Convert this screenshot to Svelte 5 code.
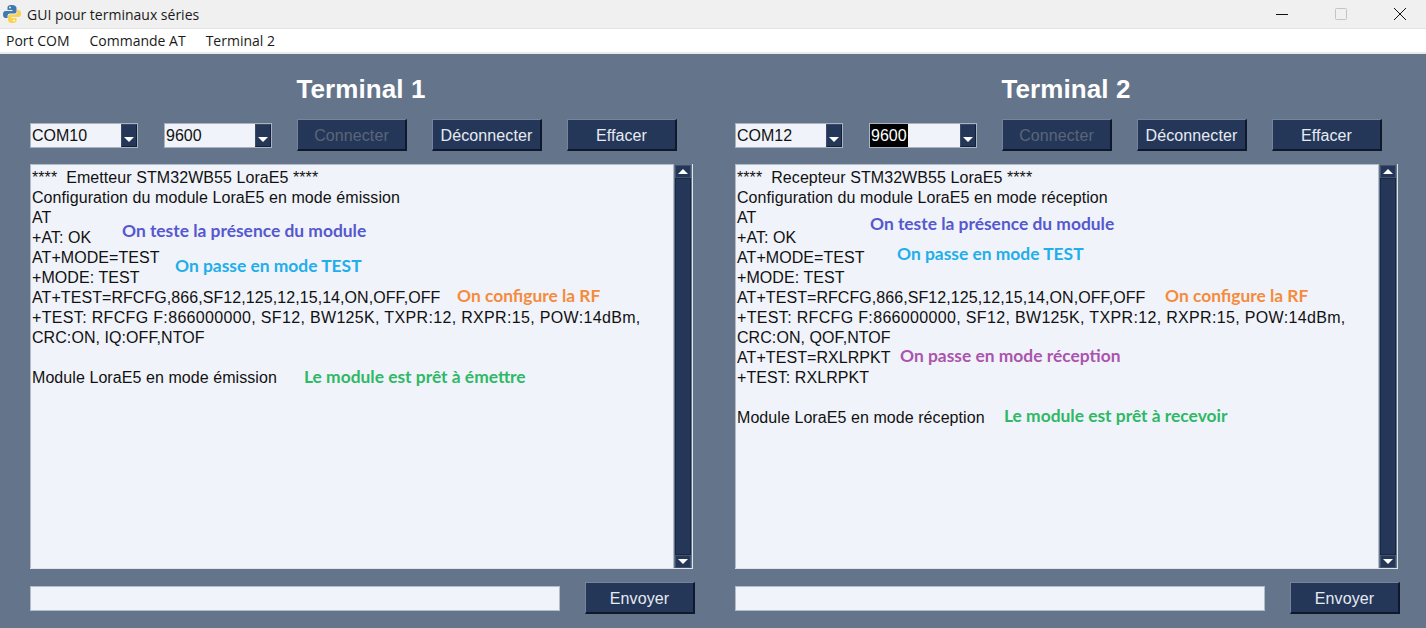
<script>
	const terminals = [
		{
			title: 'Terminal 1',
			port: 'COM10',
			selected: false,
			lines: [
				'****  Emetteur STM32WB55 LoraE5 ****',
				'Configuration du module LoraE5 en mode émission',
				'AT',
				'+AT: OK',
				'AT+MODE=TEST',
				'+MODE: TEST',
				'AT+TEST=RFCFG,866,SF12,125,12,15,14,ON,OFF,OFF',
				'+TEST: RFCFG F:866000000, SF12, BW125K, TXPR:12, RXPR:15, POW:14dBm,',
				'CRC:ON, IQ:OFF,NTOF',
				'',
				'Module LoraE5 en mode émission'
			],
			notes: [
				{ text: 'On teste la présence du module', x: 91, y: 56, color: '#5558cf' },
				{ text: 'On passe en mode TEST', x: 144, y: 91, color: '#22aeea' },
				{ text: 'On configure la RF', x: 426, y: 121, color: '#f58b3c' },
				{ text: 'Le module est prêt à émettre', x: 273, y: 202, color: '#2fb865' }
			]
		},
		{
			title: 'Terminal 2',
			port: 'COM12',
			selected: true,
			lines: [
				'****  Recepteur STM32WB55 LoraE5 ****',
				'Configuration du module LoraE5 en mode réception',
				'AT',
				'+AT: OK',
				'AT+MODE=TEST',
				'+MODE: TEST',
				'AT+TEST=RFCFG,866,SF12,125,12,15,14,ON,OFF,OFF',
				'+TEST: RFCFG F:866000000, SF12, BW125K, TXPR:12, RXPR:15, POW:14dBm,',
				'CRC:ON, QOF,NTOF',
				'AT+TEST=RXLRPKT',
				'+TEST: RXLRPKT',
				'',
				'Module LoraE5 en mode réception'
			],
			notes: [
				{ text: 'On teste la présence du module', x: 134, y: 49, color: '#5558cf' },
				{ text: 'On passe en mode TEST', x: 161, y: 79, color: '#22aeea' },
				{ text: 'On configure la RF', x: 429, y: 121, color: '#f58b3c' },
				{ text: 'On passe en mode réception', x: 164, y: 181, color: '#ab54ad' },
				{ text: 'Le module est prêt à recevoir', x: 268, y: 241, color: '#2fb865' }
			]
		}
	];
</script>

<div class="window">
	<header class="titlebar">
		<svg class="logo" width="20" height="20" viewBox="0 0 20 20">
			<path d="M10 1C6 1 5.500 2.500 5.500 4V6H10.500V7H3.500C1.800 7 1 8.500 1 10.500S2 14 3.500 14H5.500V12C5.500 10.500 6.500 9.500 8 9.500H12.500C13.800 9.500 14.500 8.500 14.500 7.500V4C14.500 2.500 13 1 10 1Z" fill="#3f79ad" />
			<path d="M10 19C14 19 14.500 17.500 14.500 16V14H9.500V13H16.500C18.200 13 19 11.500 19 9.500S18 6 16.500 6H15V8C15 9.500 14 10.500 12.500 10.500H8C6.700 10.500 6 11.500 6 12.500V16C6 17.500 7 19 10 19Z" fill="#f7d253" />
			<circle cx="8" cy="3.500" r="0.900" fill="#fff" />
			<circle cx="12" cy="16.500" r="0.900" fill="#fff" />
		</svg>
		<span class="app-title">GUI pour terminaux séries</span>
		<div class="window-controls">
			<svg width="12" height="12" viewBox="0 0 12 12"><path d="M0 6.500H12" stroke="#111" /></svg>
			<svg class="restore" width="12" height="12" viewBox="0 0 12 12"><rect x="0.500" y="0.500" width="11" height="11" rx="1" fill="none" stroke="#c4c4c4" /></svg>
			<svg width="12" height="12" viewBox="0 0 12 12"><path d="M0 0L12 12M12 0L0 12" stroke="#111" /></svg>
		</div>
	</header>

	<nav class="menubar">
		<span>Port COM</span>
		<span>Commande AT</span>
		<span>Terminal 2</span>
	</nav>

	<main class="panels">
		{#each terminals as term}
			<section class="panel">
				<h2>{term.title}</h2>

				<div class="controls">
					<div class="combo">
						<span class="combo-value"><span>{term.port}</span></span>
						<span class="combo-btn"><i class="arrow down"></i></span>
					</div>
					<div class="combo">
						<span class="combo-value"><span class:selected={term.selected}>9600</span></span>
						<span class="combo-btn"><i class="arrow down"></i></span>
					</div>
					<button class="btn disabled">Connecter</button>
					<button class="btn">Déconnecter</button>
					<button class="btn">Effacer</button>
				</div>

				<div class="output">
					<div class="text">
						{#each term.lines as line}
							<div class="line" class:wide={line.startsWith('+TEST: RFCFG')}>{line}</div>
						{/each}
						{#each term.notes as note}
							<span class="note" style="left: {note.x}px; top: {note.y}px; color: {note.color}">{note.text}</span>
						{/each}
					</div>
					<div class="scrollbar">
						<span class="scroll-btn"><i class="arrow up"></i></span>
						<span class="scroll-thumb"></span>
						<span class="scroll-btn"><i class="arrow down"></i></span>
					</div>
				</div>

				<div class="send-row">
					<div class="entry"></div>
					<button class="btn send">Envoyer</button>
				</div>
			</section>
		{/each}
	</main>
</div>

<style>
	:global(body) {
		margin: 0;
		background: #64748b;
		overflow: hidden;
	}

	.window {
		display: flex;
		flex-direction: column;
		height: 628px;
		font-family: 'Liberation Sans', Arial, sans-serif;
	}

	.titlebar {
		display: flex;
		align-items: center;
		height: 29px;
		background: #f0f0f0;
		color: #1a1a1a;
		font-family: 'Open Sans', sans-serif;
		font-size: 14px;
		box-sizing: border-box;
		border-bottom: 1px solid #e4e4e4;
	}

	.logo {
		margin: 0 5px 0 2px;
	}

	.window-controls {
		margin-left: auto;
		display: flex;
		align-items: center;
		gap: 47px;
		padding-right: 20px;
	}

	.menubar {
		display: flex;
		align-items: center;
		gap: 20px;
		height: 23px;
		padding-left: 6px;
		background: #fff;
		border-bottom: 2px solid #e8e9ea;
		color: #1a1a1a;
		font-family: 'Open Sans', sans-serif;
		font-size: 14px;
	}

	.panels {
		flex: 1;
		display: grid;
		grid-template-columns: 664px 664px;
		gap: 41px;
		padding-left: 30px;
	}

	.panel {
		display: flex;
		flex-direction: column;
		min-width: 0;
	}

	h2 {
		margin: 0;
		padding-top: 20px;
		height: 45px;
		line-height: 30px;
		box-sizing: border-box;
		text-align: center;
		font-size: 26px;
		font-weight: 700;
		letter-spacing: 0.1px;
		color: #fff;
		padding-right: 2px;
	}

	.controls {
		display: flex;
		align-items: center;
		height: 32px;
		margin-top: 20px;
	}

	.combo {
		display: flex;
		flex: none;
		width: 108px;
		height: 25px;
		margin-right: 26px;
		box-sizing: border-box;
		border: 1px solid #a9b2bf;
		background: #f0f3fa;
	}

	.combo + .combo {
		margin-right: 25px;
	}

	.combo-value {
		flex: 1;
		font-size: 16px;
		line-height: 23px;
		color: #111;
	}

	.combo-value span {
		display: inline-block;
		padding: 0 1px;
	}

	.combo-value .selected {
		background: #000;
		color: #fff;
	}

	.combo-btn {
		display: flex;
		align-items: flex-end;
		justify-content: center;
		width: 16px;
		padding-bottom: 4px;
		box-sizing: border-box;
		background: #253759;
		border: 1px solid #3d4b66;
		border-right-color: #14203a;
		border-bottom-color: #14203a;
	}

	.arrow {
		display: block;
		width: 0;
		height: 0;
		border-left: 5px solid transparent;
		border-right: 5px solid transparent;
	}

	.arrow.down {
		border-top: 5px solid #fff;
	}

	.arrow.up {
		border-bottom: 5px solid #fff;
	}

	.btn {
		flex: none;
		width: 110px;
		height: 32px;
		margin: 0 25px 0 0;
		padding: 2px 0 0;
		background: #253759;
		color: #e6ebf2;
		font-family: inherit;
		font-size: 16px;
		letter-spacing: 0.1px;
		border-style: solid;
		border-width: 1px 2px 2px 1px;
		border-color: #76839a #10192c #10192c #76839a;
	}

	.btn:last-child {
		margin-right: 0;
	}

	.btn.disabled {
		color: #5a6678;
	}

	.output {
		display: flex;
		height: 405px;
		margin-top: 13px;
		width: 663px;
		box-sizing: border-box;
		border-right: 1px solid #dfe4ec;
		border-bottom: 1px solid #dfe4ec;
	}

	.text {
		position: relative;
		flex: none;
		width: 644px;
		box-sizing: border-box;
		padding: 3px 0 0 1px;
		background: #f0f3fa;
		border: 1px solid #b4bcc8;
		border-bottom: 0;
		color: #111;
		font-size: 16px;
		line-height: 20px;
	}

	.line {
		height: 20px;
		white-space: pre;
		letter-spacing: 0.07px;
	}

	.line.wide {
		letter-spacing: 0.335px;
	}

	.note {
		position: absolute;
		font-family: Lato, sans-serif;
		font-size: 17.400px;
		font-weight: 700;
		line-height: 20px;
		white-space: nowrap;
	}

	.scrollbar {
		display: flex;
		flex-direction: column;
		flex: 1;
		padding: 1px 1px 0 1px;
	}

	.scroll-btn {
		display: flex;
		flex: none;
		align-items: center;
		justify-content: center;
		height: 13px;
		background: #253759;
		border: 1px solid #44526c;
		box-sizing: border-box;
	}

	.scroll-thumb {
		flex: 1;
		background: #253759;
		border: 1px solid #1a2845;
	}

	.send-row {
		display: flex;
		align-items: center;
		margin-top: 13px;
		height: 32px;
	}

	.entry {
		flex: none;
		width: 530px;
		height: 25px;
		box-sizing: border-box;
		background: #f0f3fa;
		border: 1px solid #b4bcc8;
	}

	.btn.send {
		margin: 0 0 0 25px;
	}
</style>
